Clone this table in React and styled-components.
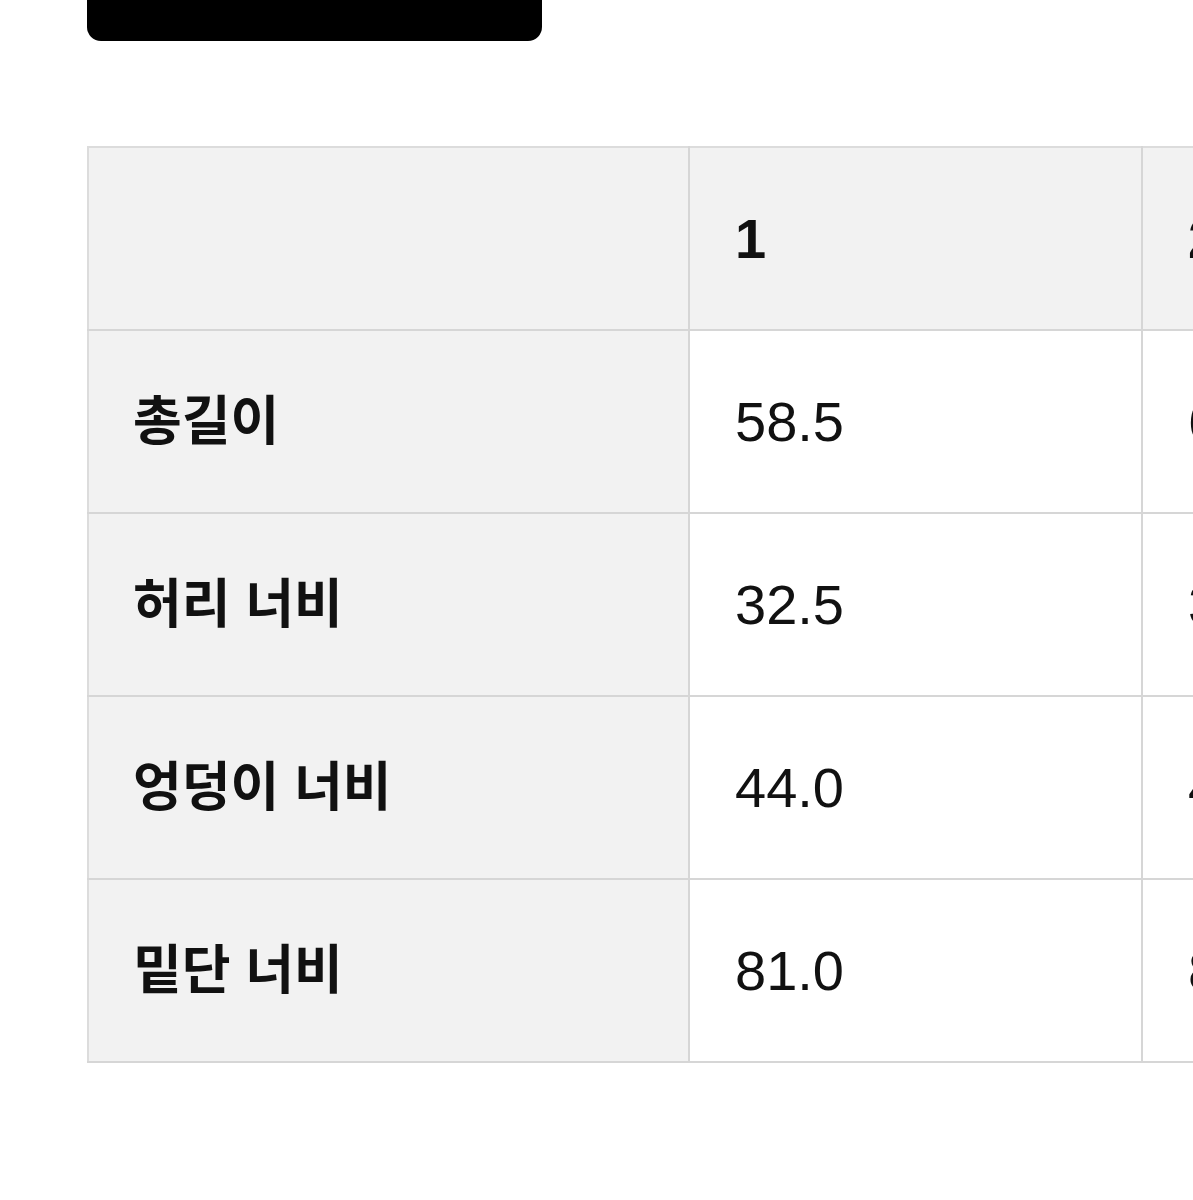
import React from 'react';
import styled, { createGlobalStyle } from 'styled-components';

const GlobalStyle = createGlobalStyle`
  html, body {
    margin: 0;
    padding: 0;
    background: #fff;
    overflow: hidden;
  }
  body {
    font-family: "Liberation Sans", "Noto Sans CJK KR", sans-serif;
    color: #111;
  }
`;

// Styles

const Page = styled.div`
  padding-left: 87px;
  width: 1600px;
`;

const TopButton = styled.div`
  width: 455px;
  height: 41px;
  background: #000;
  border-radius: 0 0 14px 14px;
`;

const SizeTable = styled.table`
  margin-top: 105px;
  border-collapse: collapse;
  table-layout: fixed;
  border-top: 2px solid #dcdcdc;
  border-left: 2px solid #dcdcdc;
`;

const Cell = styled.td`
  height: 181px;
  padding: 0 0 0 ${props => (props.$label ? 44 : 45)}px;
  border-right: 2px solid #d6d6d6;
  border-bottom: 2px solid #d6d6d6;
  background: ${props => (props.$shade ? '#f2f2f2' : '#fff')};
  font-size: ${props => (props.$label ? 53 : 56)}px;
  font-weight: ${props => (props.$bold ? 700 : 400)};
  vertical-align: middle;
  text-align: left;
  white-space: nowrap;
  line-height: 1;
`;

const rows = [
  ['총길이', '58.5', '60.0'],
  ['허리 너비', '32.5', '34.0'],
  ['엉덩이 너비', '44.0', '46.0'],
  ['밑단 너비', '81.0', '83.0'],
];

const App = () => {
  return (
    <Page>
      <GlobalStyle />
      <TopButton />
      <SizeTable>
        <colgroup>
          <col style={{ width: 601 }} />
          <col style={{ width: 453 }} />
          <col style={{ width: 453 }} />
        </colgroup>
        <thead>
          <tr>
            <Cell as="th" $shade $label />
            <Cell as="th" $shade $bold>1</Cell>
            <Cell as="th" $shade $bold>2</Cell>
          </tr>
        </thead>
        <tbody>
          {rows.map(([label, a, b]) => (
            <tr key={label}>
              <Cell $shade $label $bold>{label}</Cell>
              <Cell>{a}</Cell>
              <Cell>{b}</Cell>
            </tr>
          ))}
        </tbody>
      </SizeTable>
    </Page>
  );
};

export default App;
